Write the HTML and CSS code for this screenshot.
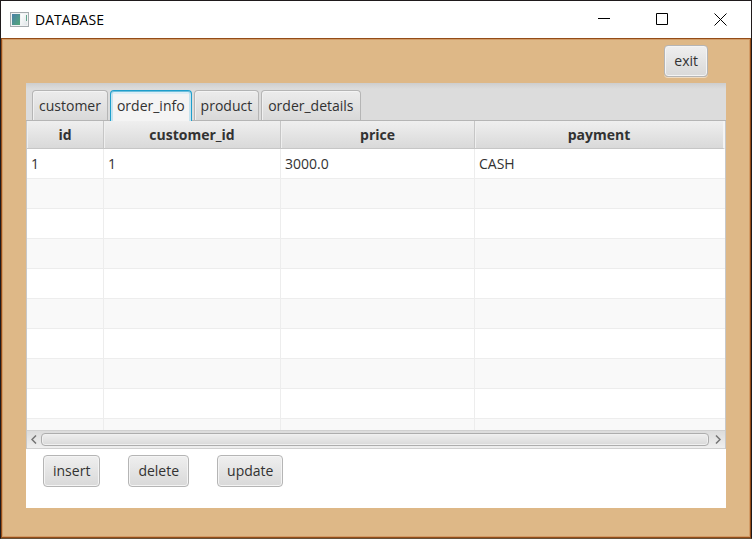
FILE: index.html
```html
<!DOCTYPE html>
<html lang="en">
<head>
<meta charset="utf-8">
<title>DATABASE</title>
<link rel="stylesheet" href="styles.css">
</head>
<body>
<div class="window">
  <header class="titlebar">
    <svg class="app-icon" width="19" height="16" viewBox="0 0 19 16" aria-hidden="true">
      <defs>
        <linearGradient id="screen" x1="0" y1="0" x2="1" y2="1">
          <stop offset="0" stop-color="#4a7fa8"/>
          <stop offset="1" stop-color="#52a878"/>
        </linearGradient>
        <linearGradient id="side" x1="0" y1="0" x2="1" y2="1">
          <stop offset="0" stop-color="#ffffff"/>
          <stop offset="1" stop-color="#dfe5e8"/>
        </linearGradient>
      </defs>
      <rect x="0.5" y="0.5" width="18" height="14" fill="#f1f3f4" stroke="#a5abae"/>
      <rect x="2" y="2" width="8" height="11" fill="url(#screen)"/>
      <rect x="11" y="2" width="6" height="11" fill="url(#side)"/>
      <rect x="16" y="3" width="1" height="6" fill="#62a58c"/>
    </svg>
    <h1 class="title">DATABASE</h1>
    <button class="caption" aria-label="Minimize"><svg width="13" height="13" viewBox="0 0 13 13"><path d="M0 5.5h12"/></svg></button>
    <button class="caption" aria-label="Maximize"><svg width="13" height="13" viewBox="0 0 13 13"><path d="M.5.5h11v11H.5z"/></svg></button>
    <button class="caption" aria-label="Close"><svg width="13" height="13" viewBox="0 0 13 13"><path d="M.5.5l12 12M12.5.5l-12 12"/></svg></button>
  </header>
  <main class="content">
    <div class="topbar"><button class="btn">exit</button></div>
    <section class="pane">
      <div class="tabs" role="tablist">
        <button class="tab" role="tab">customer</button>
        <button class="tab selected" role="tab" aria-selected="true">order_info</button>
        <button class="tab" role="tab">product</button>
        <button class="tab" role="tab">order_details</button>
      </div>
      <div class="table-view">
        <div class="rows">
          <table>
            <colgroup><col class="c-id"><col class="c-customer"><col class="c-price"><col></colgroup>
            <thead><tr><th>id</th><th>customer_id</th><th>price</th><th>payment</th></tr></thead>
            <tbody>
              <tr><td>1</td><td>1</td><td>3000.0</td><td>CASH</td></tr>
              <tr><td></td><td></td><td></td><td></td></tr>
              <tr><td></td><td></td><td></td><td></td></tr>
              <tr><td></td><td></td><td></td><td></td></tr>
              <tr><td></td><td></td><td></td><td></td></tr>
              <tr><td></td><td></td><td></td><td></td></tr>
              <tr><td></td><td></td><td></td><td></td></tr>
              <tr><td></td><td></td><td></td><td></td></tr>
              <tr><td></td><td></td><td></td><td></td></tr>
              <tr><td></td><td></td><td></td><td></td></tr>
            </tbody>
          </table>
        </div>
        <div class="scrollbar">
          <button class="arrow" aria-label="Scroll left"><svg width="6" height="9" viewBox="0 0 6 9"><path d="M5 .5l-4 4 4 4"/></svg></button>
          <div class="thumb"></div>
          <button class="arrow" aria-label="Scroll right"><svg width="6" height="9" viewBox="0 0 6 9"><path d="M1 .5l4 4-4 4"/></svg></button>
        </div>
      </div>
      <div class="actions">
        <button class="btn">insert</button>
        <button class="btn">delete</button>
        <button class="btn">update</button>
      </div>
    </section>
  </main>
</div>
</body>
</html>
```
FILE: styles.css
```css
* { box-sizing: border-box; }

body {
  margin: 0;
  font: 14px/20px "Open Sans", "Noto Sans", sans-serif;
  color: #323232;
}

button {
  margin: 0;
  font: inherit;
  color: inherit;
}

.window {
  display: flex;
  flex-direction: column;
  height: 100vh;
  border: 1px solid #1f1a1c;
  border-bottom-color: #66523a;
}

.titlebar {
  display: flex;
  align-items: center;
  height: 37px;
  padding: 0 2px 0 9px;
  background: #fff;
}

.title {
  flex: 1;
  margin: 0 0 0 6px;
  font-size: 14px;
  font-weight: 400;
  color: #000;
}

.caption {
  display: grid;
  place-items: center;
  width: 58px;
  height: 100%;
  padding: 0;
  border: 0;
  background: none;
}

.caption path {
  fill: none;
  stroke: #000;
}

.content {
  display: flex;
  flex: 1;
  flex-direction: column;
  min-height: 0;
  padding: 6px 24px 29px;
  border: 1px solid #944d18;
  background: #deb887;
  box-shadow: inset 0 0 0 1px #d29c67;
}

.topbar {
  display: flex;
  justify-content: flex-end;
  padding-right: 18px;
  margin-bottom: 6px;
}

.btn {
  height: 32px;
  padding: 0 9px;
  border: 1px solid #b5b5b5;
  border-radius: 4px;
  background: linear-gradient(#efefef, #d9d9d9);
  box-shadow: inset 0 0 0 1px #f4f4f4, 0 1px 0 #ffffff80;
}

.pane {
  display: flex;
  flex: 1;
  flex-direction: column;
  min-height: 0;
  background: #fff;
}

.tabs {
  display: flex;
  gap: 2px;
  height: 38px;
  padding: 7px 6px 0;
  border-bottom: 1px solid #b5b5b5;
  background: linear-gradient(#cecece, #dcdcdc 6px);
}

.tab {
  height: 30px;
  padding: 0 6px;
  border: 1px solid #b5b5b5;
  border-bottom: 0;
  border-radius: 4px 4px 0 0;
  background: linear-gradient(#ececec, #d9d9d9);
  box-shadow: inset 0 1px #f4f4f4, inset 1px 0 #f0f0f0;
}

.tab.selected {
  height: 31px;
  border-color: #1e9ecb;
  background: #f4f4f4;
  box-shadow: inset 0 1px #6fbfdc, inset 2px 0 #c4e3ef, inset -2px 0 #c4e3ef, inset 0 3px #dceef6;
}

.table-view {
  display: flex;
  flex: 1;
  flex-direction: column;
  min-height: 0;
  border: solid #c8c8c8;
  border-width: 0 1px;
}

.rows {
  flex: 1;
  min-height: 0;
  overflow: hidden;
}

table {
  width: 100%;
  border-spacing: 0;
  table-layout: fixed;
}

.c-id { width: 77px; }
.c-customer { width: 177px; }
.c-price { width: 194px; }

th {
  height: 28px;
  padding: 0;
  border-right: 1px solid #c6c6c6;
  border-bottom: 1px solid #c6c6c6;
  background: linear-gradient(#efefef, #d9d9d9);
  background-clip: padding-box;
  box-shadow: inset 1px 0 #efefef;
}

th:last-child { border-right: 2px solid #f4f4f4; }

td {
  height: 30px;
  padding: 0 4px;
  border-right: 1px solid #ededed;
  border-bottom: 1px solid #ededed;
}

td:last-child { border-right: 0; }

tbody tr:nth-child(even) { background: #f9f9f9; }

.scrollbar {
  display: flex;
  height: 19px;
  padding: 2px 0;
  border: 1px solid #d0d0d0;
  border-width: 1px 0;
  background: linear-gradient(#dcdcdc, #efefef);
}

.arrow {
  display: grid;
  place-items: center;
  width: 14px;
  padding: 0;
  border: 0;
  background: none;
}

.arrow path {
  fill: none;
  stroke: #737373;
  stroke-width: 1.5;
}

.thumb {
  flex: 1;
  margin-right: 2px;
  border: 1px solid #adadad;
  border-radius: 4px;
  background: linear-gradient(#efefef, #d9d9d9);
  box-shadow: inset 0 0 0 1px #f0f0f0;
}

.actions {
  display: flex;
  gap: 28px;
  padding: 6px 17px 21px;
}
```
